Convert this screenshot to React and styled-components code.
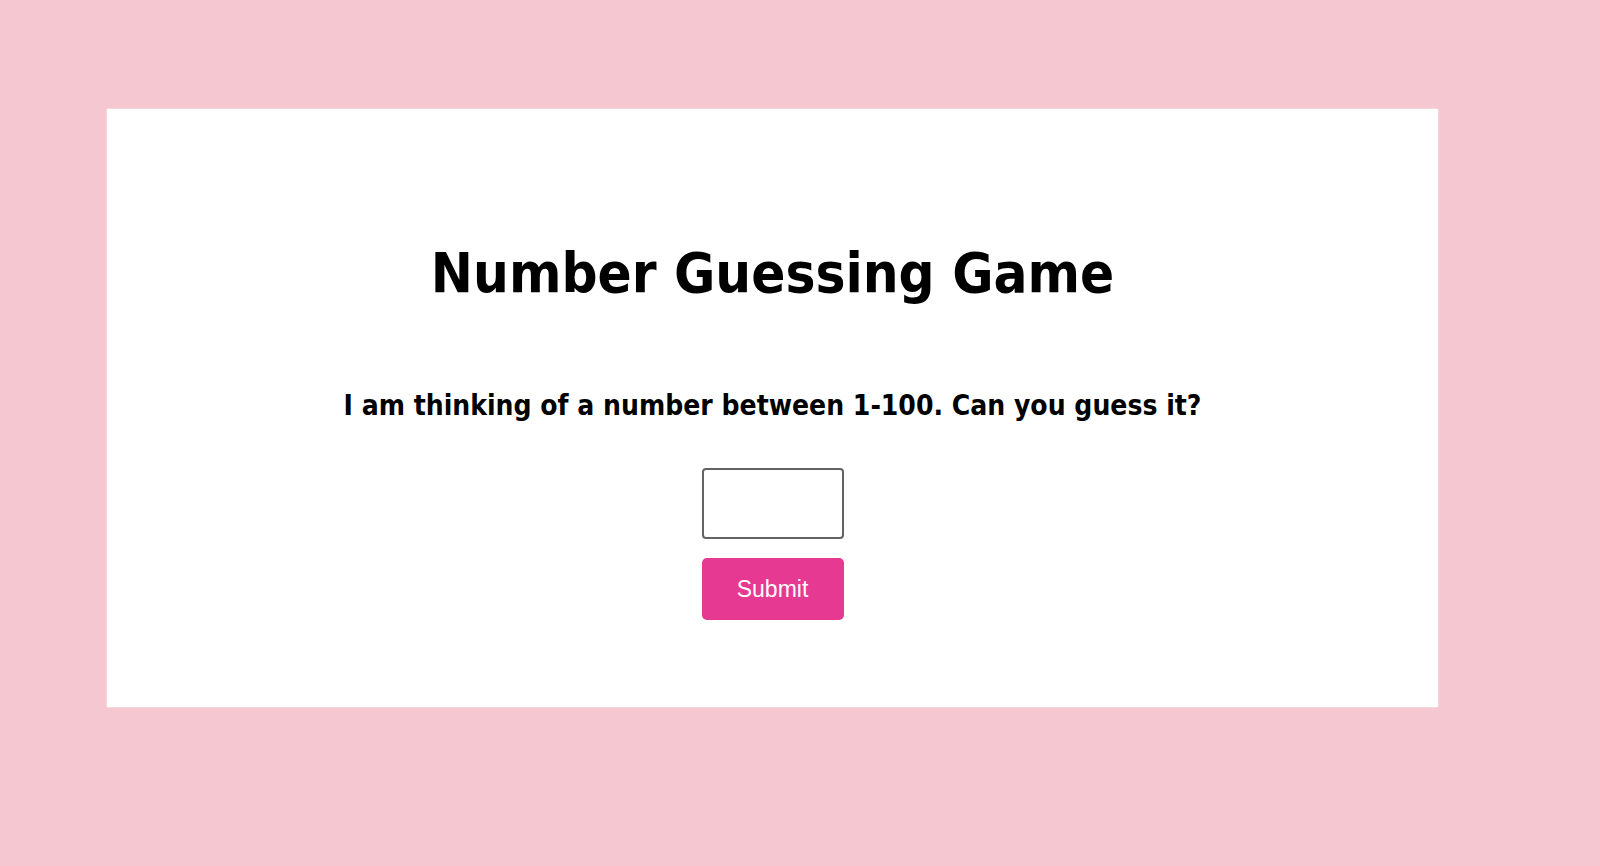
import React from "react";
import styled, { createGlobalStyle } from "styled-components";

const GlobalStyle = createGlobalStyle`
  html, body {
    margin: 0;
    padding: 0;
  }
  body {
    background: #f5c7d1;
    font-family: "DejaVu Sans Condensed", "DejaVu Sans", sans-serif;
    min-height: 866px;
  }
`;

const Page = styled.div`
  padding: 109px 162px 159px 107px;
`;

const Card = styled.main`
  background: #ffffff;
  height: 598px;
  box-sizing: border-box;
  padding-top: 129px;
  display: flex;
  flex-direction: column;
  align-items: center;
  box-shadow: 0 0 2px rgba(255, 255, 255, 0.8);
`;

const Title = styled.h1`
  margin: 0;
  font-size: 56px;
  line-height: 70px;
  font-weight: 700;
  color: #000;
`;

const Prompt = styled.p`
  margin: 81px 0 0;
  font-size: 28px;
  line-height: 34px;
  font-weight: 700;
  color: #000;
`;

const GuessForm = styled.form`
  margin-top: 45px;
  display: flex;
  flex-direction: column;
  align-items: center;
  gap: 19px;
`;

const GuessInput = styled.input`
  width: 142px;
  height: 71px;
  box-sizing: border-box;
  border: 2px solid #636363;
  border-radius: 4px;
  background: #fff;
  font-size: 22px;
  text-align: center;
  outline: none;
`;

const SubmitButton = styled.button`
  width: 142px;
  height: 62px;
  border: none;
  border-radius: 5px;
  background: #e63991;
  color: #fff;
  font-family: "Liberation Sans", Arial, sans-serif;
  font-size: 23px;
  cursor: pointer;
`;

export default function App() {
  return (
    <>
      <GlobalStyle />
      <Page>
        <Card>
          <Title>Number Guessing Game</Title>
          <Prompt>I am thinking of a number between 1-100. Can you guess it?</Prompt>
          <GuessForm onSubmit={(e) => e.preventDefault()}>
            <GuessInput type="text" aria-label="Your guess" />
            <SubmitButton type="submit">Submit</SubmitButton>
          </GuessForm>
        </Card>
      </Page>
    </>
  );
}
